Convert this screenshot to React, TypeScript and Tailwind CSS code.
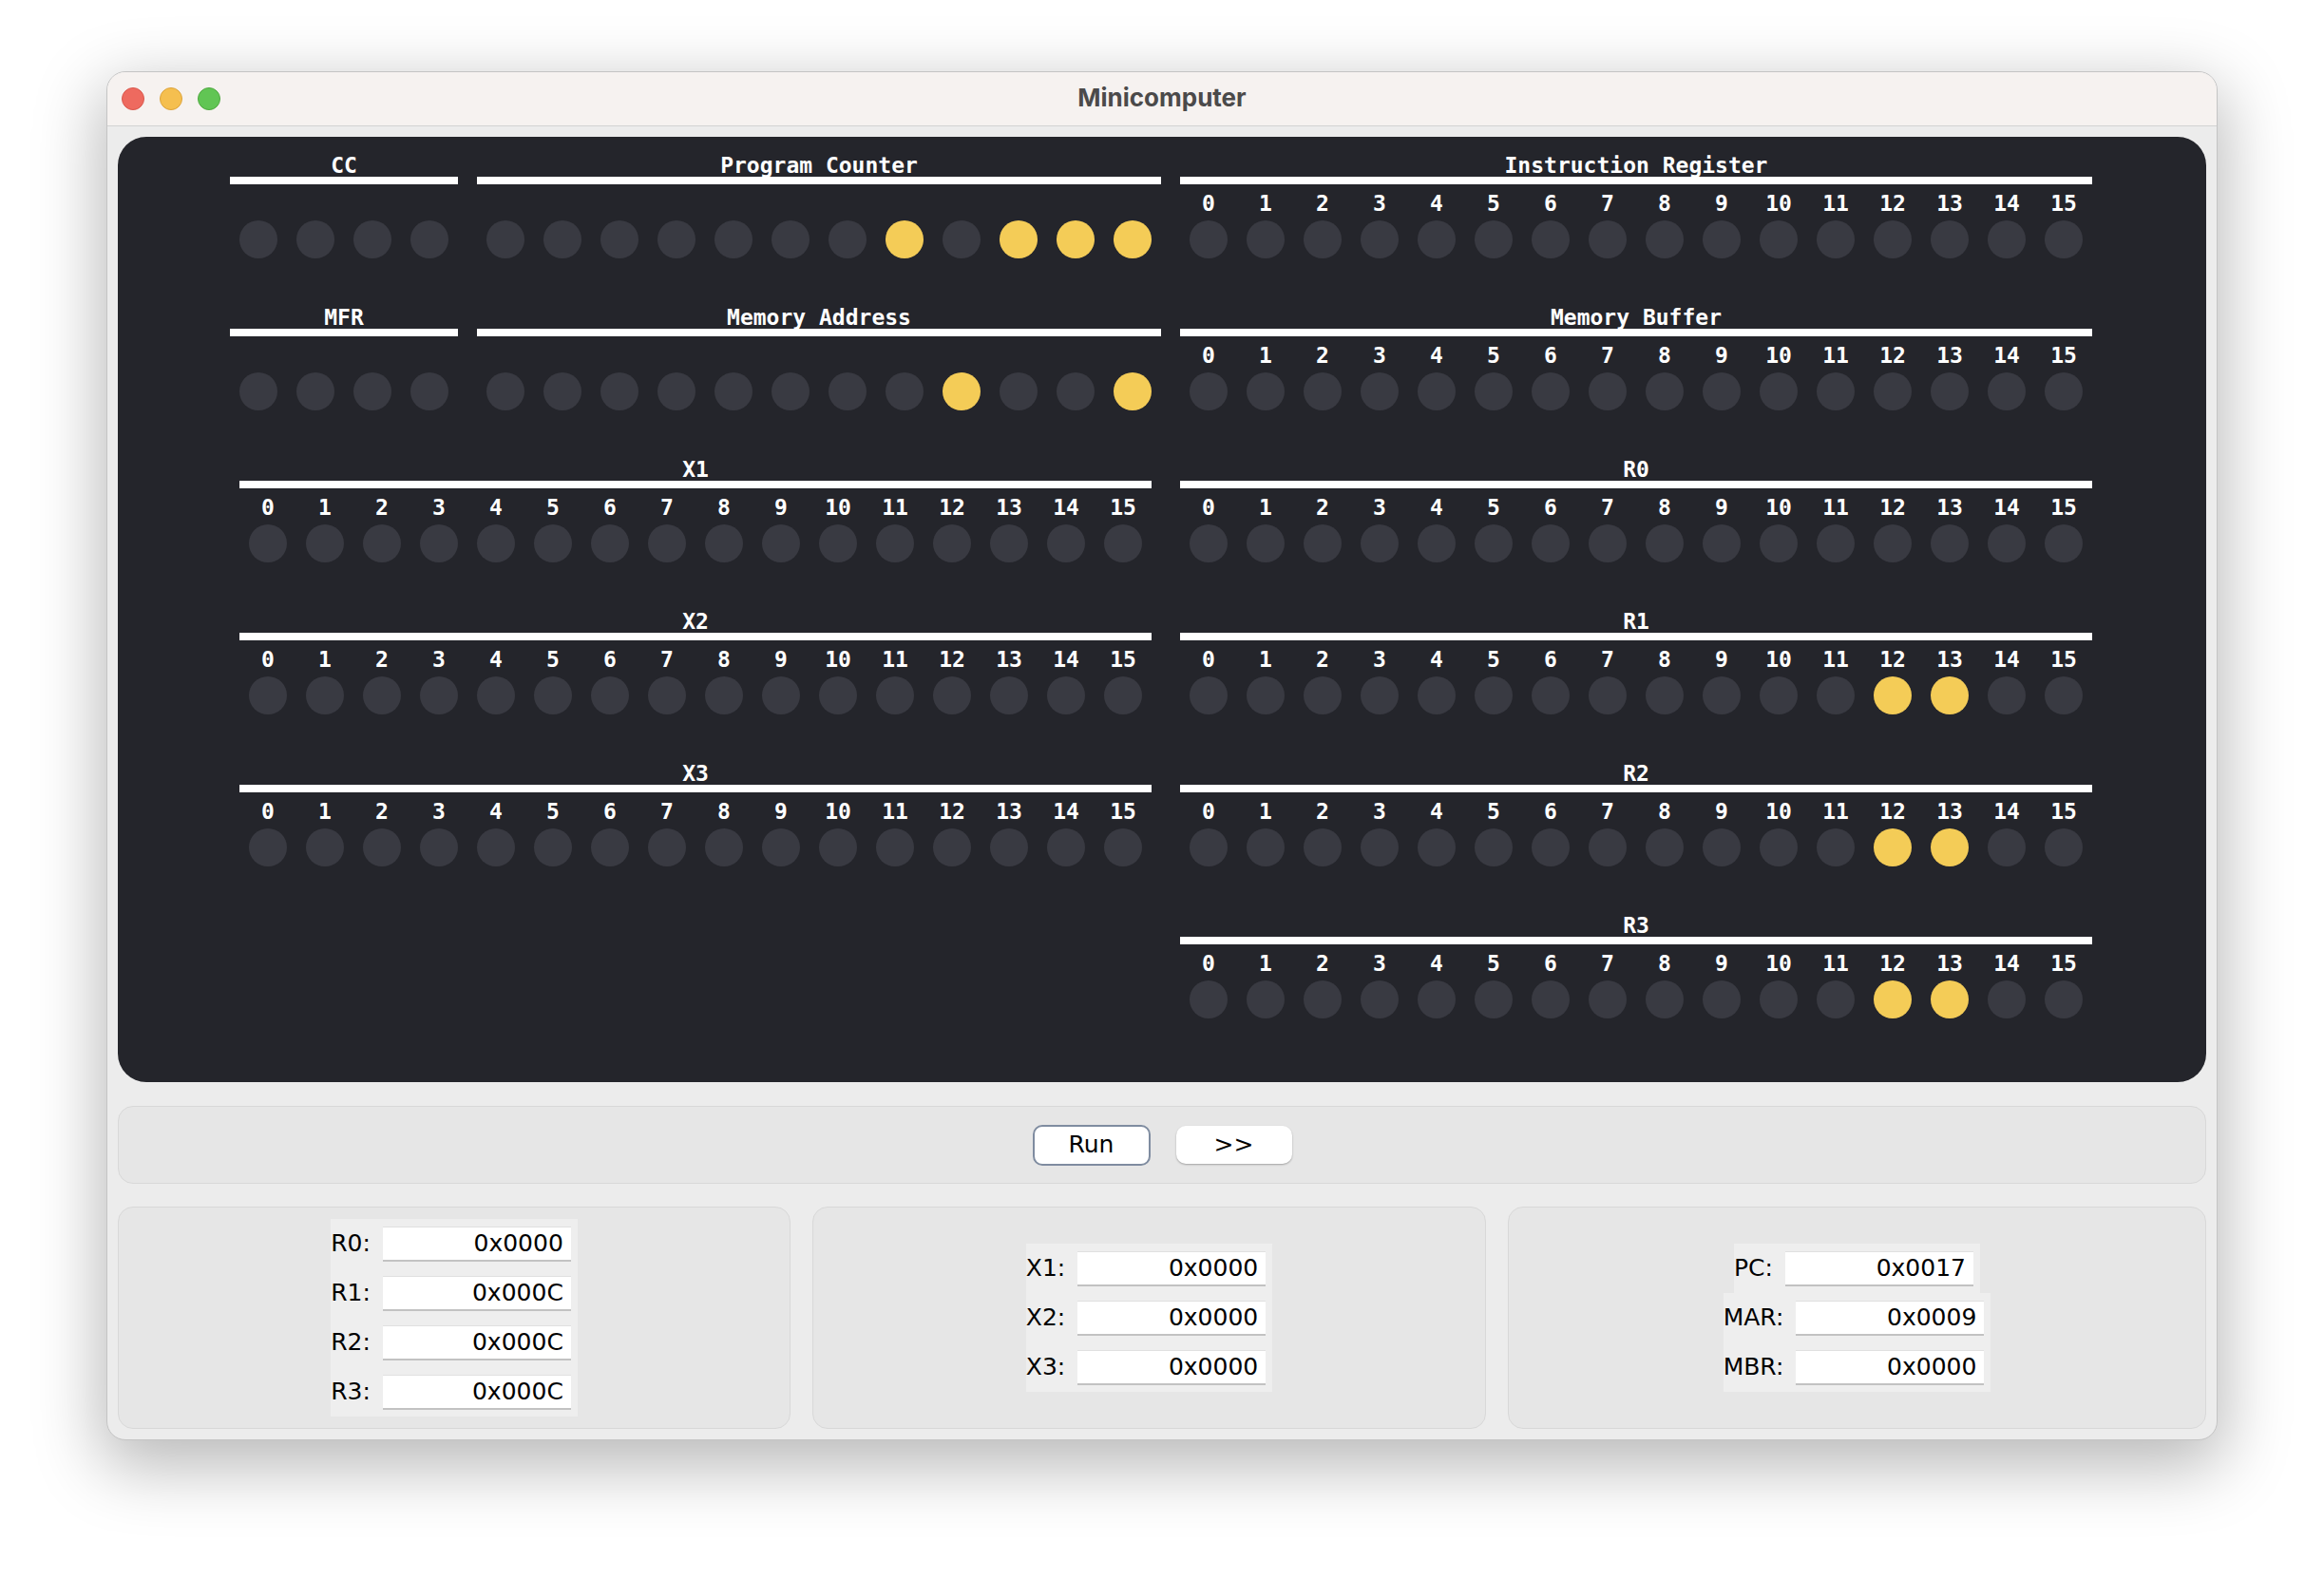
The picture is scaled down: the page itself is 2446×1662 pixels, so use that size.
import React from "react";

type Group = { title: string; bits: number; lit: number[]; numbered: boolean };

const ROWS: { left: Group[]; right: Group }[] = [
  {
    left: [
      { title: "CC", bits: 4, lit: [], numbered: false },
      { title: "Program Counter", bits: 12, lit: [7, 9, 10, 11], numbered: false },
    ],
    right: { title: "Instruction Register", bits: 16, lit: [], numbered: true },
  },
  {
    left: [
      { title: "MFR", bits: 4, lit: [], numbered: false },
      { title: "Memory Address", bits: 12, lit: [8, 11], numbered: false },
    ],
    right: { title: "Memory Buffer", bits: 16, lit: [], numbered: true },
  },
  {
    left: [{ title: "X1", bits: 16, lit: [], numbered: true }],
    right: { title: "R0", bits: 16, lit: [], numbered: true },
  },
  {
    left: [{ title: "X2", bits: 16, lit: [], numbered: true }],
    right: { title: "R1", bits: 16, lit: [12, 13], numbered: true },
  },
  {
    left: [{ title: "X3", bits: 16, lit: [], numbered: true }],
    right: { title: "R2", bits: 16, lit: [12, 13], numbered: true },
  },
  {
    left: [],
    right: { title: "R3", bits: 16, lit: [12, 13], numbered: true },
  },
];

function BitGroup({ group }: { group: Group }) {
  const cells = Array.from({ length: group.bits }, (_, i) => i);
  return (
    <div className="flex flex-col" style={{ width: group.bits * 60 }}>
      <div className="h-[24px] text-center text-[23px] leading-[24px] font-bold text-white">
        {group.title}
      </div>
      <div className="h-[8px] bg-white" />
      <div className="mt-[6px] flex h-[28px]">
        {group.numbered &&
          cells.map((i) => (
            <div key={i} className="w-[60px] text-center text-[23px] leading-[28px] font-bold text-white">
              {i}
            </div>
          ))}
      </div>
      <div className="mt-[4px] flex">
        {cells.map((i) => (
          <div key={i} className="flex w-[60px] justify-center">
            <div
              className={
                group.lit.includes(i)
                  ? "h-[40px] w-[40px] rounded-full bg-[#f4cc57]"
                  : "h-[40px] w-[40px] rounded-full bg-[#393a42]"
              }
            />
          </div>
        ))}
      </div>
    </div>
  );
}

function Field({ label, value }: { label: string; value: string }) {
  return (
    <div className="flex h-[52px] items-center bg-[#eeeeee] pr-[7px]">
      <span className="mr-[13px] text-[25px] text-black">{label}</span>
      <div className="flex h-[37px] w-[198px] items-center justify-end border-t border-b-2 border-t-[#e0e0e0] border-b-[#c2c2c2] bg-white pr-[8px] text-[25px] text-black">
        {value}
      </div>
    </div>
  );
}

function FieldPanel({ fields }: { fields: [string, string][] }) {
  return (
    <div className="flex flex-col items-center justify-center rounded-[16px] border border-[#d8d8d8] bg-[#e6e6e6]">
      {fields.map(([l, v]) => (
        <Field key={l} label={l} value={v} />
      ))}
    </div>
  );
}

export default function App() {
  return (
    <div className="min-h-screen bg-white pt-[75px]">
      <div className="mx-auto flex w-[2222px] flex-col overflow-hidden rounded-[20px] border border-[#c4c4c4] bg-[#ececec] shadow-[0_22px_70px_6px_rgba(0,0,0,0.28)]">
        {/* Title bar */}
        <div className="relative flex h-[57px] items-center justify-center border-b border-[#d2d2d2] bg-[#f6f2f0] pb-[3px]">
          <div className="absolute left-[15px] top-[16px] flex gap-[16px]">
            <div className="h-[24px] w-[24px] rounded-full border border-[#d9574c] bg-[#ee6a5f]" />
            <div className="h-[24px] w-[24px] rounded-full border border-[#dca33b] bg-[#f5bf4f]" />
            <div className="h-[24px] w-[24px] rounded-full border border-[#4ea83f] bg-[#61c554]" />
          </div>
          <span className="font-['Inter',sans-serif] text-[26px] font-bold text-[#4b4a4a]">Minicomputer</span>
        </div>

        <div className="flex flex-col px-[11px] pt-[11px] pb-[11px]">
          {/* Lights */}
          <div className="rounded-[30px] bg-[#24252b] pt-[18px] pb-[67px] font-['DejaVu_Sans_Mono',monospace]">
            <div className="ml-[118px] flex w-[1960px] flex-col gap-[50px]">
              {ROWS.map((row, r) => (
                <div key={r} className="flex gap-[20px]">
                  <div className="flex w-[980px] justify-center gap-[20px]">
                    {row.left.map((g) => (
                      <BitGroup key={g.title} group={g} />
                    ))}
                  </div>
                  <BitGroup group={row.right} />
                </div>
              ))}
            </div>
          </div>

          {/* Controls */}
          <div className="mt-[25px] flex h-[82px] items-center justify-center gap-[27px] rounded-[16px] border border-[#d8d8d8] bg-[#e6e6e6] font-['DejaVu_Sans',sans-serif]">
            <button className="h-[43px] w-[124px] rounded-[10px] border-2 border-[#7f8ca0] bg-white text-[25px] text-black">
              Run
            </button>
            <button className="h-[40px] w-[122px] rounded-[10px] bg-white text-[25px] text-black shadow-[0_1px_2px_rgba(0,0,0,0.3)]">
              &gt;&gt;
            </button>
          </div>

          {/* Register readouts */}
          <div className="mt-[24px] grid h-[234px] grid-cols-[708px_709px_1fr] gap-[23px] font-['DejaVu_Sans',sans-serif]">
            <FieldPanel
              fields={[
                ["R0:", "0x0000"],
                ["R1:", "0x000C"],
                ["R2:", "0x000C"],
                ["R3:", "0x000C"],
              ]}
            />
            <FieldPanel
              fields={[
                ["X1:", "0x0000"],
                ["X2:", "0x0000"],
                ["X3:", "0x0000"],
              ]}
            />
            <FieldPanel
              fields={[
                ["PC:", "0x0017"],
                ["MAR:", "0x0009"],
                ["MBR:", "0x0000"],
              ]}
            />
          </div>
        </div>
      </div>
    </div>
  );
}
